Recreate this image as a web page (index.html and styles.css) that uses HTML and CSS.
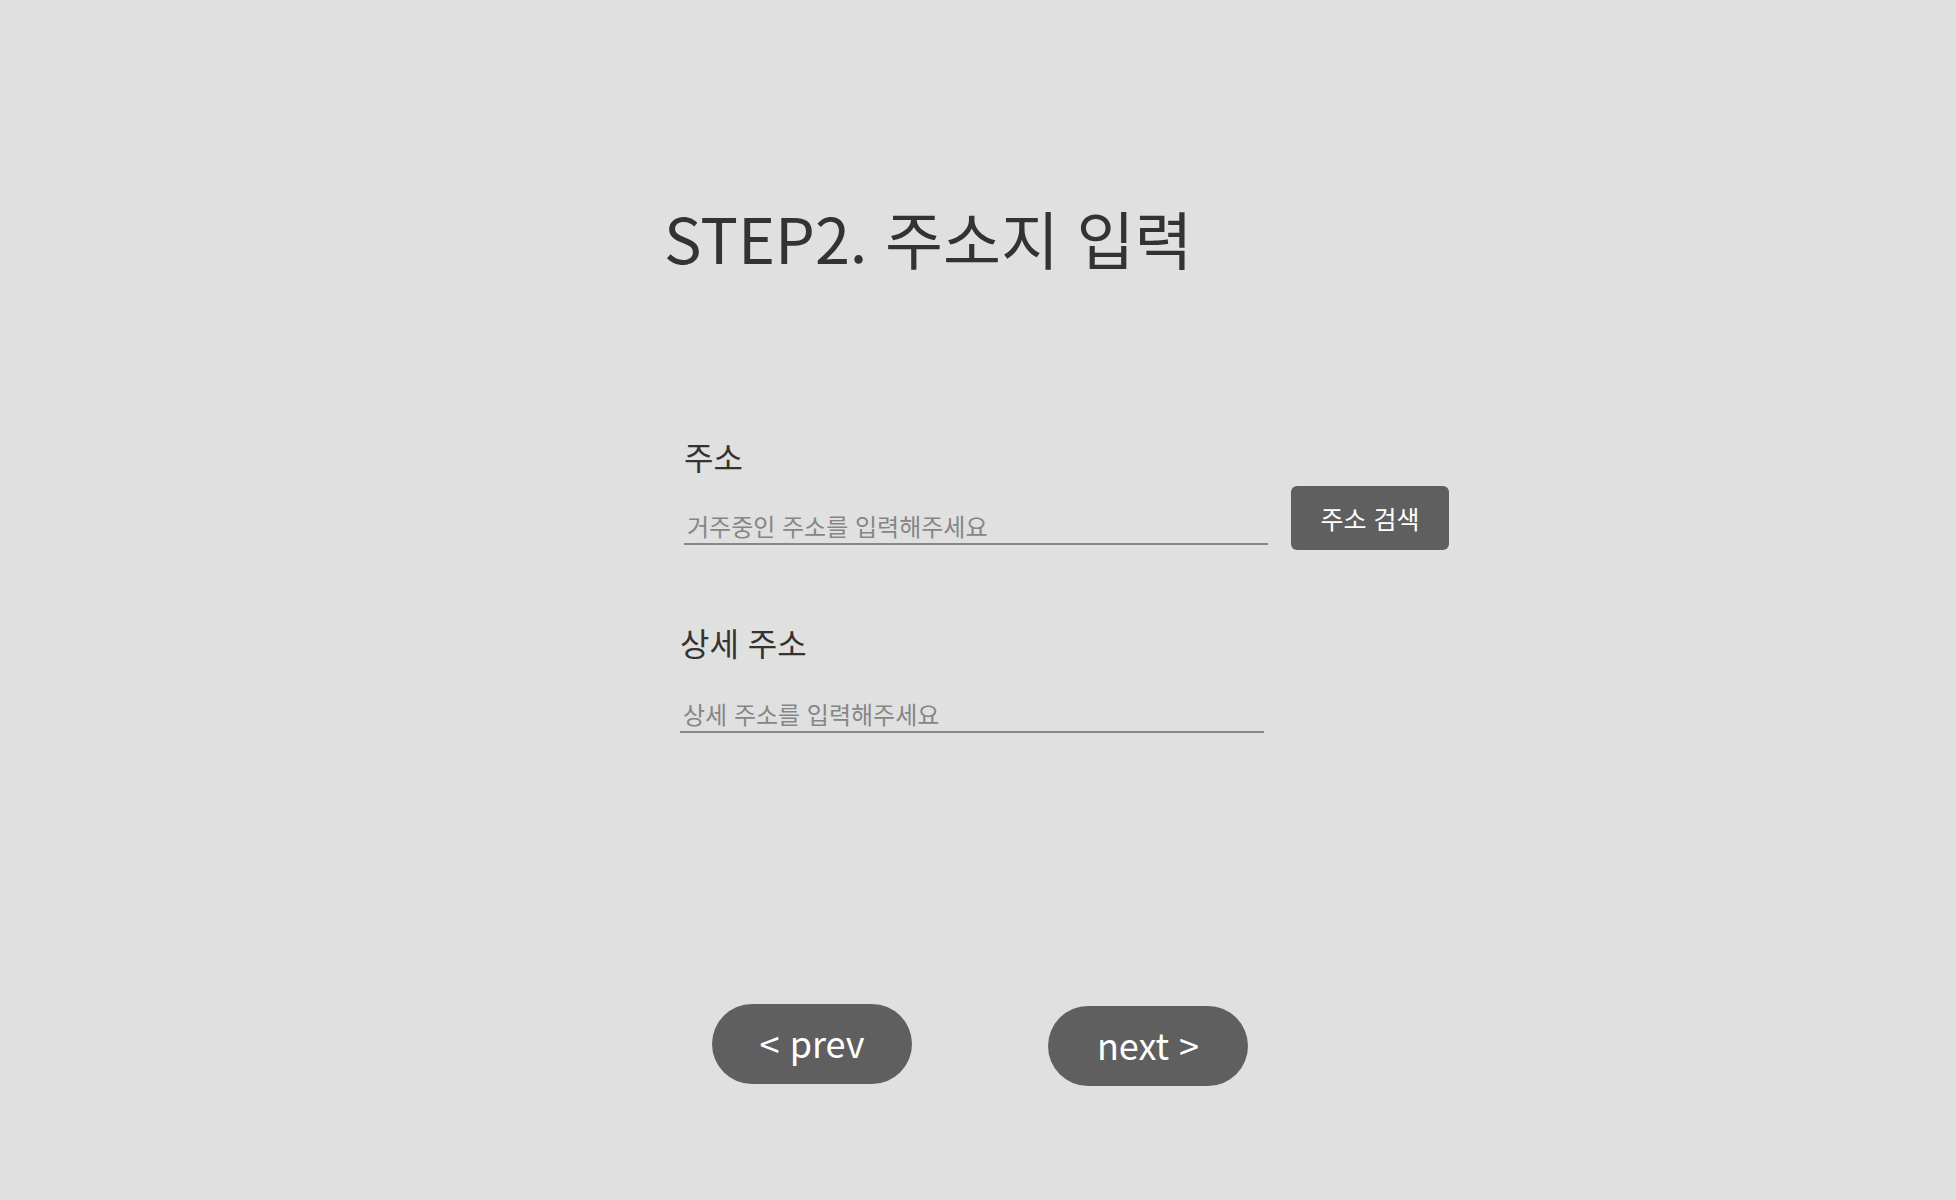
FILE: index.html
```html
<!DOCTYPE html>
<html lang="ko">
<head>
<meta charset="utf-8">
<title>STEP2. 주소지 입력</title>
<link rel="stylesheet" href="styles.css">
</head>
<body>
<main class="page">
  <h1 class="title">STEP2. 주소지 입력</h1>
  <form class="form">
    <div class="field">
      <label class="label" for="addr">주소</label>
      <div class="row">
        <input class="input" id="addr" type="text" placeholder="거주중인 주소를 입력해주세요">
        <button class="search-btn" type="button">주소 검색</button>
      </div>
    </div>
    <div class="field field-detail">
      <label class="label" for="detail">상세 주소</label>
      <div class="row">
        <input class="input" id="detail" type="text" placeholder="상세 주소를 입력해주세요">
      </div>
    </div>
  </form>
  <nav class="nav">
    <button class="nav-btn" type="button">&lt; prev</button>
    <button class="nav-btn nav-next" type="button">next &gt;</button>
  </nav>
</main>
</body>
</html>
```
FILE: styles.css
```css
html, body {
  margin: 0;
  padding: 0;
}
body {
  background: #e0e0e0;
  color: #333333;
  font-family: "Noto Sans CJK KR", "Noto Sans", sans-serif;
  width: 1956px;
  height: 1200px;
  overflow: hidden;
}
.page {
  padding-top: 201px;
}
.title {
  margin: 0 0 0 664px;
  font-size: 63px;
  line-height: 72px;
  font-weight: 400;
  color: #333333;
}
.form {
  margin: 165px 0 0 684px;
  display: flex;
  flex-direction: column;
}
.field {
  display: flex;
  flex-direction: column;
}
.field-detail {
  margin: 74px 0 0 -4px;
}
.label {
  font-size: 32px;
  line-height: 36px;
  color: #333333;
}
.row {
  display: flex;
  align-items: flex-end;
  margin-top: 12px;
}
.field-detail .row {
  margin-top: 38px;
}
.input {
  width: 584px;
  box-sizing: border-box;
  height: 35px;
  margin: 0 0 5px 0;
  padding: 0 3px 3px 3px;
  border: 0;
  border-bottom: 2px solid #888888;
  background: transparent;
  font-family: inherit;
  font-size: 24px;
  line-height: 30px;
  color: #333333;
  outline: none;
}
.field-detail .input {
  margin-bottom: 0;
}
.input::placeholder {
  color: #868686;
}
.search-btn {
  margin-left: 23px;
  width: 158px;
  height: 64px;
  border: 0;
  border-radius: 6px;
  background: #5f5f5f;
  color: #ffffff;
  font-family: inherit;
  font-size: 25px;
  line-height: 30px;
  padding: 0;
}
.nav {
  margin: 271px 0 0 712px;
  display: flex;
  align-items: flex-start;
  gap: 136px;
}
.nav-btn {
  width: 200px;
  height: 80px;
  border: 0;
  border-radius: 40px;
  background: #5f5f5f;
  color: #ffffff;
  font-family: inherit;
  font-size: 36px;
  line-height: 44px;
  padding: 0 0 5px 0;
}
.nav-next {
  margin-top: 2px;
}
```
